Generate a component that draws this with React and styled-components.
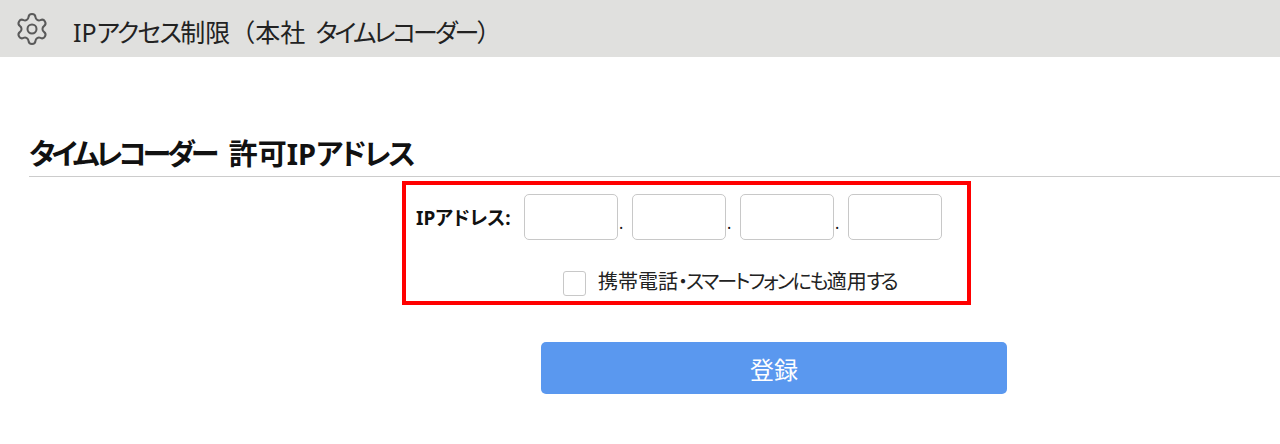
import React from 'react'
import styled, { createGlobalStyle } from 'styled-components'
import { Settings } from 'lucide-react'

const Global = createGlobalStyle`
  html, body { margin: 0; padding: 0; background: #fff; }
  body {
    font-family: "Noto Sans", "Noto Sans CJK JP", sans-serif;
    color: #111;
  }
`

const Header = styled.header`
  height: 57px;
  background: #e0e0de;
  display: flex;
  align-items: center;
  padding-left: 14px;
  box-sizing: border-box;
`

const HeaderTitle = styled.h1`
  margin: 5px 0 0 23px;
  font-size: 25px;
  font-weight: 400;
  color: #222;
  word-spacing: 4px;
  white-space: nowrap;
`

// kana runs are set tighter than kanji, like the narrow UI font in the original
const Kana = styled.span`
  font-feature-settings: "palt";
  letter-spacing: ${(p) => p.$track || '0'};
`

const Section = styled.section`
  padding: 79px 0 0 29px;
`

const SectionTitle = styled.h2`
  margin: 0;
  height: 40px;
  line-height: 35px;
  font-size: 29px;
  font-weight: 700;
  color: #111;
  word-spacing: 6px;
  border-bottom: 1px solid #ccc;
  white-space: nowrap;
  box-sizing: content-box;
`

const Form = styled.form`
  width: 569px;
  height: 124px;
  margin: 4px 0 0 373px;
  border: 4px solid #f00;
  box-sizing: border-box;
  padding: 9px 0 0 10px;
`

const IpRow = styled.div`
  display: flex;
  align-items: center;
`

const Label = styled.label`
  width: 108px;
  font-size: 19px;
  font-weight: 700;
  white-space: nowrap;
`

const IpInput = styled.input`
  width: 94px;
  height: 46px;
  box-sizing: border-box;
  border: 1px solid #c8c8c8;
  border-radius: 5px;
  background: #fff;
  padding: 0;
`

const Dot = styled.span`
  width: 14px;
  align-self: flex-end;
  text-align: left;
  padding-left: 1px;
  box-sizing: border-box;
  font-size: 16px;
  line-height: 20px;
  padding-bottom: 7px;
`

const CheckRow = styled.div`
  display: flex;
  align-items: center;
  margin: 31px 0 0 147px;
`

const CheckBox = styled.span`
  width: 23px;
  height: 25px;
  box-sizing: border-box;
  border: 1px solid #c8c8c8;
  border-radius: 3px;
  flex: none;
`

const CheckLabel = styled.span`
  margin: -3px 0 0 12px;
  font-size: 20px;
  line-height: 26px;
  color: #222;
  white-space: nowrap;
`

const Actions = styled.div`
  padding: 37px 0 0 512px;
`

const SubmitButton = styled.button`
  width: 466px;
  height: 52px;
  border: none;
  border-radius: 5px;
  background: #5a98ef;
  color: #fff;
  font-family: inherit;
  font-size: 24px;
  padding: 0;
`

export default function App() {
  return (
    <>
      <Global />
      <Header>
        <Settings size={36} strokeWidth={1.35} color="#5a5a5a" />
        <HeaderTitle>
          IP<Kana $track="-1.8px">アクセス</Kana>制限（本社 <Kana $track="-3px">タイムレコーダー</Kana>）
        </HeaderTitle>
      </Header>
      <Section>
        <SectionTitle>
          <Kana $track="-4px">タイムレコーダー</Kana> 許可IP<Kana $track="-2.4px">アドレス</Kana>
        </SectionTitle>
        <Form>
          <IpRow>
            <Label>
              IP<Kana>アドレス</Kana>:
            </Label>
            <IpInput />
            <Dot>.</Dot>
            <IpInput />
            <Dot>.</Dot>
            <IpInput />
            <Dot>.</Dot>
            <IpInput />
          </IpRow>
          <CheckRow>
            <CheckBox />
            <CheckLabel>
              携帯電話<Kana $track="-2px">・スマートフォンにも</Kana>適用<Kana $track="-4px">する</Kana>
            </CheckLabel>
          </CheckRow>
        </Form>
        <Actions>
          <SubmitButton type="button">登録</SubmitButton>
        </Actions>
      </Section>
    </>
  )
}
